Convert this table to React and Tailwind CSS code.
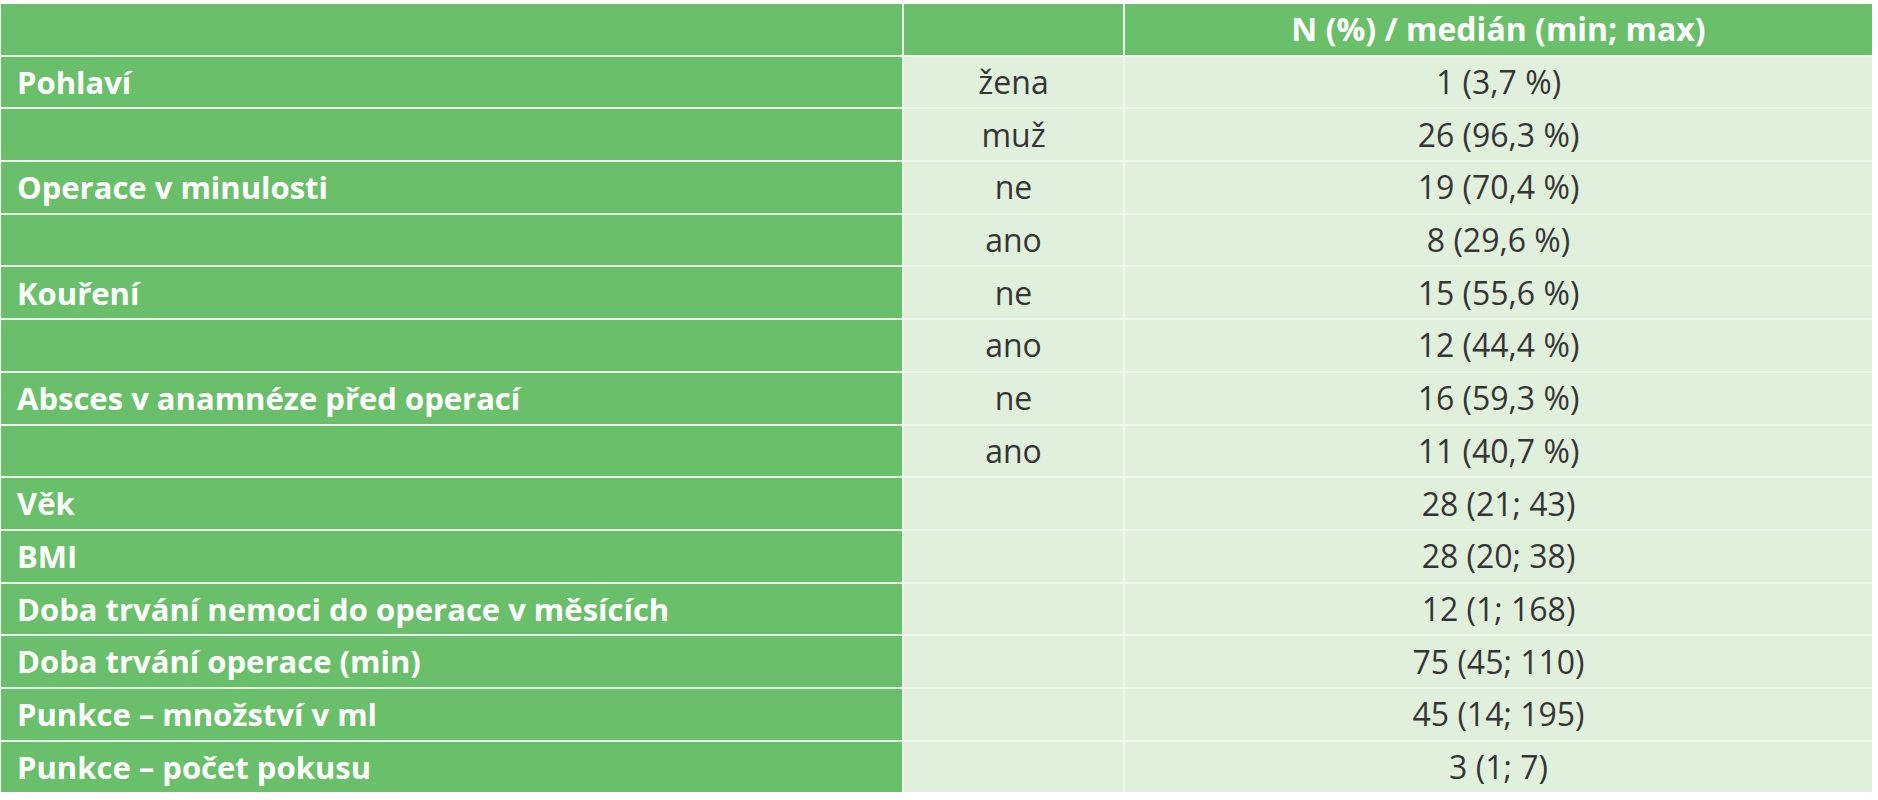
const rows = [
  ["Pohlaví", "žena", "1 (3,7 %)"],
  ["", "muž", "26 (96,3 %)"],
  ["Operace v minulosti", "ne", "19 (70,4 %)"],
  ["", "ano", "8 (29,6 %)"],
  ["Kouření", "ne", "15 (55,6 %)"],
  ["", "ano", "12 (44,4 %)"],
  ["Absces v anamnéze před operací", "ne", "16 (59,3 %)"],
  ["", "ano", "11 (40,7 %)"],
  ["Věk", "", "28 (21; 43)"],
  ["BMI", "", "28 (20; 38)"],
  ["Doba trvání nemoci do operace v měsících", "", "12 (1; 168)"],
  ["Doba trvání operace (min)", "", "75 (45; 110)"],
  ["Punkce – množství v ml", "", "45 (14; 195)"],
  ["Punkce – počet pokusu", "", "3 (1; 7)"],
];

export default function App() {
  return (
    <div className="min-h-[800px] bg-white pt-[4px] pl-[1px] font-['Open_Sans',sans-serif]">
      <div className="grid w-fit grid-cols-[901px_219px_747px] auto-rows-[50.7px] gap-[2px] bg-[#eef7ec]">
        <div className="bg-[#6abf6a]" />
        <div className="bg-[#6abf6a]" />
        <div className="flex items-center justify-center bg-[#6abf6a] text-[32px] font-bold text-white">
          N (%) / medián (min; max)
        </div>
        {rows.map(([label, group, value], i) => (
          <div key={i} className="contents">
            <div className="flex items-center bg-[#6abf6a] pl-[16px] text-[31px] font-bold text-white">
              {label}
            </div>
            <div className="flex items-center justify-center bg-[#e1f0dc] text-[32px] text-[#353535]">
              {group}
            </div>
            <div className="flex items-center justify-center bg-[#e1f0dc] text-[32px] text-[#353535]">
              {value}
            </div>
          </div>
        ))}
      </div>
    </div>
  );
}
